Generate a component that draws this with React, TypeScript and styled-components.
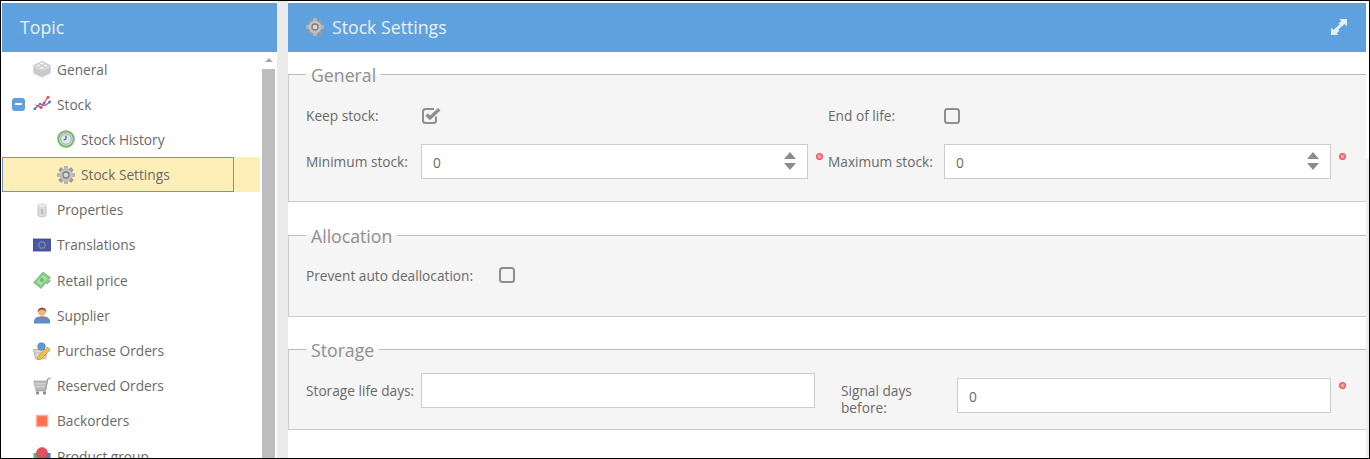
import React from "react";
import styled, { createGlobalStyle } from "styled-components";

const Global = createGlobalStyle`
  html, body { margin: 0; padding: 0; background: #fff; }
  body { font-family: "Open Sans", "Liberation Sans", sans-serif; }
`;

const Frame = styled.div`
  box-sizing: border-box;
  width: 1370px;
  height: 459px;
  border: 1px solid #000;
  padding: 2px 0 0 1px;
  display: flex;
  overflow: hidden;
  background: #fff;
`;
const Sidebar = styled.aside`
  width: 275px;
  flex: none;
  display: flex;
  flex-direction: column;
  overflow: hidden;
`;
const Splitter = styled.div`
  width: 11px;
  flex: none;
  background: #ebebeb;
  margin-top: -2px;
`;
const Main = styled.main`
  flex: 1;
  min-width: 0;
  overflow: hidden;
  display: flex;
  flex-direction: column;
`;
const Edge = styled.div`
  width: 3px;
  flex: none;
  margin-top: 155px;
  background: #ececec;
`;
const Header = styled.header`
  height: 49px;
  box-sizing: border-box;
  flex: none;
  background: #5fa0de;
  color: #e8f2fb;
  font-size: 17.7px;
  display: flex;
  align-items: center;
  padding: 0 18px 2px 18px;
  gap: 8px;
`;
const HeaderTitle = styled.span`
  flex: 1;
`;
const TreeWrap = styled.div`
  flex: 1;
  display: flex;
  min-height: 0;
`;
const Tree = styled.ul`
  list-style: none;
  margin: -0.6px 0 0;
  padding: 0;
  width: 258px;
  flex: none;
`;
const Row = styled.li<{ $selected?: boolean; $level: number }>`
  position: relative;
  height: 35.2px;
  display: flex;
  align-items: center;
  box-sizing: border-box;
  padding-left: ${(p) => (p.$level === 2 ? 55 : 31)}px;
  gap: 6px;
  font-size: 13.7px;
  color: #696969;
  background: ${(p) => (p.$selected ? "#feefb9" : "transparent")};
`;
const Focus = styled.span`
  position: absolute;
  left: 0;
  top: 0;
  bottom: 0;
  width: 232px;
  box-sizing: border-box;
  border: 1px solid #6d97bd;
`;
const Toggle = styled.span`
  position: absolute;
  left: 10px;
  top: 11px;
  width: 13px;
  height: 13px;
  border-radius: 3px;
  background: #5fa0de;
  display: flex;
  align-items: center;
  justify-content: center;
  &::after {
    content: "";
    width: 7px;
    height: 2px;
    background: #fff;
  }
`;
const IconSlot = styled.span`
  position: relative;
  width: 18px;
  height: 18px;
  flex: none;
  display: block;
  svg { display: block; }
`;
const Scrollbar = styled.div`
  width: 17px;
  flex: none;
  position: relative;
  display: flex;
  flex-direction: column;
  align-items: center;
`;
const ScrollArrow = styled.span`
  margin-top: 6px;
  width: 0;
  height: 0;
  border-left: 4px solid transparent;
  border-right: 4px solid transparent;
  border-bottom: 4px solid #a8a8a8;
`;
const ScrollThumb = styled.div`
  margin-top: 7px;
  width: 13px;
  flex: 1;
  background: #bdbdbd;
`;
const Content = styled.div`
  flex: 1;
  display: flex;
  flex-direction: column;
  gap: 20.6px;
  padding-top: 10px;
`;
const Group = styled.fieldset<{ $top: number; $bottom: number }>`
  margin: 0;
  min-width: 0;
  background: #f5f5f5;
  border: 0;
  border-top: 1px solid #bbb;
  border-left: 1px solid #ccc;
  border-bottom: 1px solid #ccc;
  padding: ${(p) => p.$top}px 0 ${(p) => p.$bottom}px 17px;
  display: flex;
  flex-direction: column;
  gap: 11px;
`;
const Legend = styled.legend`
  padding: 1px 5px 0;
  font-size: 17.7px;
  line-height: 24px;
  color: #8f8f8f;
`;
const FieldRow = styled.div`
  display: flex;
  align-items: flex-start;
`;
const Field = styled.div<{ $width: number; $shift?: number; $wrapped?: boolean }>`
  width: ${(p) => p.$width}px;
  flex: none;
  display: flex;
  align-items: ${(p) => (p.$wrapped ? "flex-start" : "center")};
  min-height: 35px;
  margin-top: ${(p) => p.$shift ?? 0}px;
  position: relative;
`;
const Label = styled.label<{ $width: number; $wrapped?: boolean }>`
  width: ${(p) => p.$width}px;
  flex: none;
  font-size: 13.7px;
  line-height: 17px;
  color: #696969;
  margin-top: ${(p) => (p.$wrapped ? 4 : 0)}px;
`;
const InputBox = styled.div<{ $width: number }>`
  position: relative;
  width: ${(p) => p.$width}px;
  flex: none;
`;
const TextInput = styled.input`
  box-sizing: border-box;
  display: block;
  width: 100%;
  height: 35px;
  border: 1px solid #ccc;
  background: #fff;
  padding: 2px 11px 0;
  font: 13.7px "Open Sans", "Liberation Sans", sans-serif;
  color: #696969;
  outline: none;
`;
const Spin = styled.span`
  position: absolute;
  right: 12px;
  top: 8px;
  display: flex;
  flex-direction: column;
  gap: 4px;
`;
const SpinUp = styled.span`
  width: 0;
  height: 0;
  border-left: 6px solid transparent;
  border-right: 6px solid transparent;
  border-bottom: 7px solid #8c8c8c;
`;
const SpinDown = styled.span`
  width: 0;
  height: 0;
  border-left: 6px solid transparent;
  border-right: 6px solid transparent;
  border-top: 7px solid #8c8c8c;
`;
const Required = styled.span<{ $top: number }>`
  position: absolute;
  right: -15px;
  top: ${(p) => p.$top}px;
  width: 7px;
  height: 7px;
  border-radius: 50%;
  background: radial-gradient(circle, #f7a0a0 0 25%, #ec4f5a 60%, #f08a8f 100%);
`;
const Check = styled.span`
  width: 20px;
  height: 18px;
  margin-left: 1px;
  display: block;
  svg { display: block; }
`;

const GearIcon = () => {
  const teeth = [0, 45, 90, 135, 180, 225, 270, 315];
  return (
    <svg width="18" height="18" viewBox="0 0 18 18">
      {teeth.map((a) => (
        <rect key={a} x="6.9" y="0" width="4.2" height="5" rx="0.6" fill={a % 90 ? "#9a9a9a" : "#b4b4b4"} transform={`rotate(${a} 9 9)`} />
      ))}
      <circle cx="9" cy="9" r="6.4" fill="#c2c2c2" />
      <circle cx="9" cy="9" r="3" fill="#d8d8d8" stroke="#7c7c7c" strokeWidth="1.300" />
    </svg>
  );
};

const BrickIcon = () => (
  <svg width="18" height="18" viewBox="0 0 18 18">
    <path d="M.8 5.500 9 1.500l8.200 4v7.500L9 17 .8 13z" fill="#dedede" stroke="#c2c2c2" strokeWidth=".8" />
    <path d="M.8 7 9 11l8.200-4v6L9 17 .8 13z" fill="#cacaca" />
    <ellipse cx="5.500" cy="5.500" rx="2.500" ry="1.600" fill="#f2f2f2" stroke="#bbb" strokeWidth=".6" />
    <ellipse cx="12.500" cy="5.500" rx="2.500" ry="1.600" fill="#f2f2f2" stroke="#bbb" strokeWidth=".6" />
    <ellipse cx="9" cy="7.800" rx="2.500" ry="1.600" fill="#f2f2f2" stroke="#bbb" strokeWidth=".6" />
    <ellipse cx="9" cy="3.500" rx="2.500" ry="1.500" fill="#f2f2f2" stroke="#bbb" strokeWidth=".6" />
  </svg>
);
const ChartIcon = () => (
  <svg width="18" height="18" viewBox="0 0 18 18">
    <path d="M1.500 14 7 9l5 1.500L17 7" fill="none" stroke="#4f79c0" strokeWidth="1.300" />
    <path d="M2.500 10 8 12.500 11 8l4-6" fill="none" stroke="#ea4a58" strokeWidth="1.300" />
    <circle cx="1.800" cy="13.800" r="1.400" fill="#4f79c0" />
    <circle cx="7" cy="9" r="1.300" fill="#4f79c0" />
    <circle cx="16.600" cy="7" r="1.400" fill="#4f79c0" />
    <circle cx="8" cy="12.500" r="1.500" fill="#ea4a58" />
    <circle cx="11" cy="8" r="1.500" fill="#ea4a58" />
    <circle cx="15" cy="2.300" r="1.500" fill="#ea4a58" />
  </svg>
);
const ClockIcon = () => (
  <svg width="18" height="18" viewBox="0 0 18 18">
    <circle cx="9" cy="9" r="7.800" fill="#c9dfc0" stroke="#7db573" strokeWidth="2" />
    <circle cx="9" cy="9" r="5.200" fill="#dfe7ef" stroke="#8c9aa8" strokeWidth=".7" />
    <path d="M9 5.500V9l-2.400 1.200" fill="none" stroke="#55606b" strokeWidth="1.200" />
  </svg>
);
const CylinderIcon = () => (
  <svg width="18" height="18" viewBox="0 0 18 18">
    <path d="M5 4.500c0-2 8-2 8 0v9.500c0 2.400-8 2.400-8 0z" fill="#dcdcdc" stroke="#c2c2c2" />
    <ellipse cx="9" cy="4.500" rx="3.600" ry="1.200" fill="#efefef" />
    <rect x="8" y="8" width="2" height="5" fill="#bbb" />
  </svg>
);
const FlagIcon = () => (
  <svg width="18" height="18" viewBox="0 0 18 18">
    <rect x="0.500" y="3" width="17" height="12" fill="#4a5aa6" stroke="#323f86" strokeWidth=".8" />
    <circle cx="9" cy="9" r="3.200" fill="none" stroke="#9fa48e" strokeWidth="1.200" strokeDasharray="1.300 .6" />
  </svg>
);
const MoneyIcon = () => (
  <svg width="18" height="18" viewBox="0 0 18 18">
    <path d="M.6 11.500 10 1l7.400 5.500L8 17.500z" fill="#83cb83" stroke="#6ab76c" strokeWidth=".7" />
    <path d="M3.500 11 10 3.700l4.800 3.500L8 14.800z" fill="#a9dea6" />
    <circle cx="9" cy="9" r="2" fill="#6bbb6c" />
    <path d="M13.500 13l3.700-4" stroke="#5fae62" strokeWidth="1.200" />
  </svg>
);
const PersonIcon = () => (
  <svg width="18" height="18" viewBox="0 0 18 18">
    <path d="M1 17.500c-.6-5.500 2-7.100 8-7.100s8.600 1.600 8 7.100z" fill="#5c8fc8" />
    <path d="M7.300 10.500h3.400L9 15z" fill="#d9654e" />
    <circle cx="9" cy="5.800" r="4" fill="#eab48d" />
    <path d="M4.800 6.500c-1-6.500 9.400-6.500 8.400 0-1-2.200-2.200-3-4.200-3s-3.200.8-4.200 3z" fill="#8a4f2b" />
  </svg>
);
const BasketIcon = () => (
  <svg width="18" height="18" viewBox="0 0 18 18">
    <path d="M.6 7.500h13.500l-1.500 9.300H2.500z" fill="#ded9c8" stroke="#a3a39a" strokeWidth=".8" />
    <path d="M1.500 11h12" stroke="#b5b5aa" strokeWidth=".8" />
    <circle cx="8.500" cy="4.500" r="3.800" fill="#5d9bd6" stroke="#3f75ad" strokeWidth=".6" />
    <path d="M5 14.500 14.500 5l2.800 2.800-9.500 9.500-3.300.6z" fill="#f2bf48" stroke="#b98519" strokeWidth=".6" />
  </svg>
);
const CartIcon = () => (
  <svg width="18" height="18" viewBox="0 0 18 18">
    <path d="M.8 4h13.400l-1.500 8.500H2.800z" fill="#bcbcbc" stroke="#a8a8a8" strokeWidth=".8" />
    <path d="M2 6.800h12M2.500 9.600h11" stroke="#e0e0e0" strokeWidth=".8" />
    <path d="M12.700 12.500 14.500 2.500 17.500.8" fill="none" stroke="#a0a0a0" strokeWidth="1.400" />
    <path d="M2.500 13.700h10.500" stroke="#a8a8a8" strokeWidth="1.300" />
    <circle cx="4.500" cy="16" r="1.700" fill="#8e8e8e" />
    <circle cx="11.500" cy="16" r="1.700" fill="#8e8e8e" />
  </svg>
);
const SquareIcon = () => (
  <svg width="18" height="18" viewBox="0 0 18 18">
    <rect x="3.500" y="3.500" width="11" height="11" fill="#ff7050" stroke="#f9b0a8" strokeWidth="1.400" />
  </svg>
);
const ProductGroupIcon = () => (
  <svg width="18" height="18" viewBox="0 0 18 18">
    <rect x="0.500" y="6" width="6" height="9" fill="#68ad6c" />
    <rect x="11.500" y="6" width="6" height="9" fill="#5679ad" />
    <circle cx="9" cy="6" r="5.500" fill="#e5505e" stroke="#c94050" strokeWidth=".6" />
  </svg>
);
const ExpandIcon = () => (
  <svg width="18" height="18" viewBox="0 0 18 18">
    <path d="M9.500 1H17v7.500l-2.500-2.500-2.600 2.600-3.300-3.300L11.200 3.200zM8.500 17H1V9.500L3.500 12l2.600-2.600 3.300 3.300L6.800 15.200z" fill="#e3effa" />
    <path d="M6 12 12 6" stroke="#e3effa" strokeWidth="3" />
  </svg>
);
const Checked = () => (
  <svg width="20" height="18" viewBox="0 0 20 18">
    <path d="M14 9.500v4c0 1.400-.9 2.500-2.500 2.500h-8C2 16 1 15 1 13.500v-9C1 3 2 2 3.500 2H12" fill="none" stroke="#8e8e8e" strokeWidth="2" />
    <path d="M4.500 7.500l3.500 3.500L17.300 2.300" fill="none" stroke="#8e8e8e" strokeWidth="3.400" />
  </svg>
);
const Unchecked = () => (
  <svg width="20" height="18" viewBox="0 0 20 18">
    <rect x="1" y="2" width="14" height="14" rx="2.500" fill="none" stroke="#8e8e8e" strokeWidth="2" />
  </svg>
);

const items = [
  { label: "General", icon: <BrickIcon />, level: 1 },
  { label: "Stock", icon: <ChartIcon />, level: 1, toggle: true },
  { label: "Stock History", icon: <ClockIcon />, level: 2 },
  { label: "Stock Settings", icon: <GearIcon />, level: 2, selected: true },
  { label: "Properties", icon: <CylinderIcon />, level: 1 },
  { label: "Translations", icon: <FlagIcon />, level: 1 },
  { label: "Retail price", icon: <MoneyIcon />, level: 1 },
  { label: "Supplier", icon: <PersonIcon />, level: 1 },
  { label: "Purchase Orders", icon: <BasketIcon />, level: 1 },
  { label: "Reserved Orders", icon: <CartIcon />, level: 1 },
  { label: "Backorders", icon: <SquareIcon />, level: 1 },
  { label: "Product group", icon: <ProductGroupIcon />, level: 1 },
];

const NumberInput = ({ width, value = "0", spin, dotTop }: { width: number; value?: string; spin?: boolean; dotTop?: number }) => (
  <InputBox $width={width}>
    <TextInput readOnly value={value} />
    {spin && (
      <Spin>
        <SpinUp />
        <SpinDown />
      </Spin>
    )}
    {dotTop !== undefined && <Required $top={dotTop} />}
  </InputBox>
);

export default function App() {
  return (
    <>
      <Global />
      <Frame>
        <Sidebar>
          <Header>
            <HeaderTitle>Topic</HeaderTitle>
          </Header>
          <TreeWrap>
            <Tree>
              {items.map((it) => (
                <Row key={it.label} $level={it.level} $selected={it.selected}>
                  {it.selected && <Focus />}
                  {it.toggle && <Toggle />}
                  <IconSlot>{it.icon}</IconSlot>
                  {it.label}
                </Row>
              ))}
            </Tree>
            <Scrollbar>
              <ScrollArrow />
              <ScrollThumb />
            </Scrollbar>
          </TreeWrap>
        </Sidebar>
        <Splitter />
        <Main>
          <Header>
            <IconSlot>
              <GearIcon />
            </IconSlot>
            <HeaderTitle>Stock Settings</HeaderTitle>
            <IconSlot>
              <ExpandIcon />
            </IconSlot>
          </Header>
          <Content>
            <Group $top={11} $bottom={22}>
              <Legend>General</Legend>
              <FieldRow>
                <Field $width={522}>
                  <Label $width={115}>Keep stock:</Label>
                  <Check><Checked /></Check>
                </Field>
                <Field $width={522}>
                  <Label $width={115}>End of life:</Label>
                  <Check><Unchecked /></Check>
                </Field>
              </FieldRow>
              <FieldRow>
                <Field $width={522}>
                  <Label $width={115}>Minimum stock:</Label>
                  <NumberInput width={387} spin dotTop={9} />
                </Field>
                <Field $width={522}>
                  <Label $width={116}>Maximum stock:</Label>
                  <NumberInput width={387} spin dotTop={9} />
                </Field>
              </FieldRow>
            </Group>
            <Group $top={10} $bottom={23}>
              <Legend>Allocation</Legend>
              <FieldRow>
                <Field $width={522}>
                  <Label $width={192}>Prevent auto deallocation:</Label>
                  <Check><Unchecked /></Check>
                </Field>
              </FieldRow>
            </Group>
            <Group $top={11} $bottom={13}>
              <Legend>Storage</Legend>
              <FieldRow>
                <Field $width={535}>
                  <Label $width={115}>Storage life days:</Label>
                  <NumberInput width={394} value="" />
                </Field>
                <Field $width={500} $shift={5} $wrapped>
                  <Label $width={116} $wrapped>Signal days before:</Label>
                  <NumberInput width={374} dotTop={4} />
                </Field>
              </FieldRow>
            </Group>
          </Content>
        </Main>
        <Edge />
      </Frame>
    </>
  );
}
